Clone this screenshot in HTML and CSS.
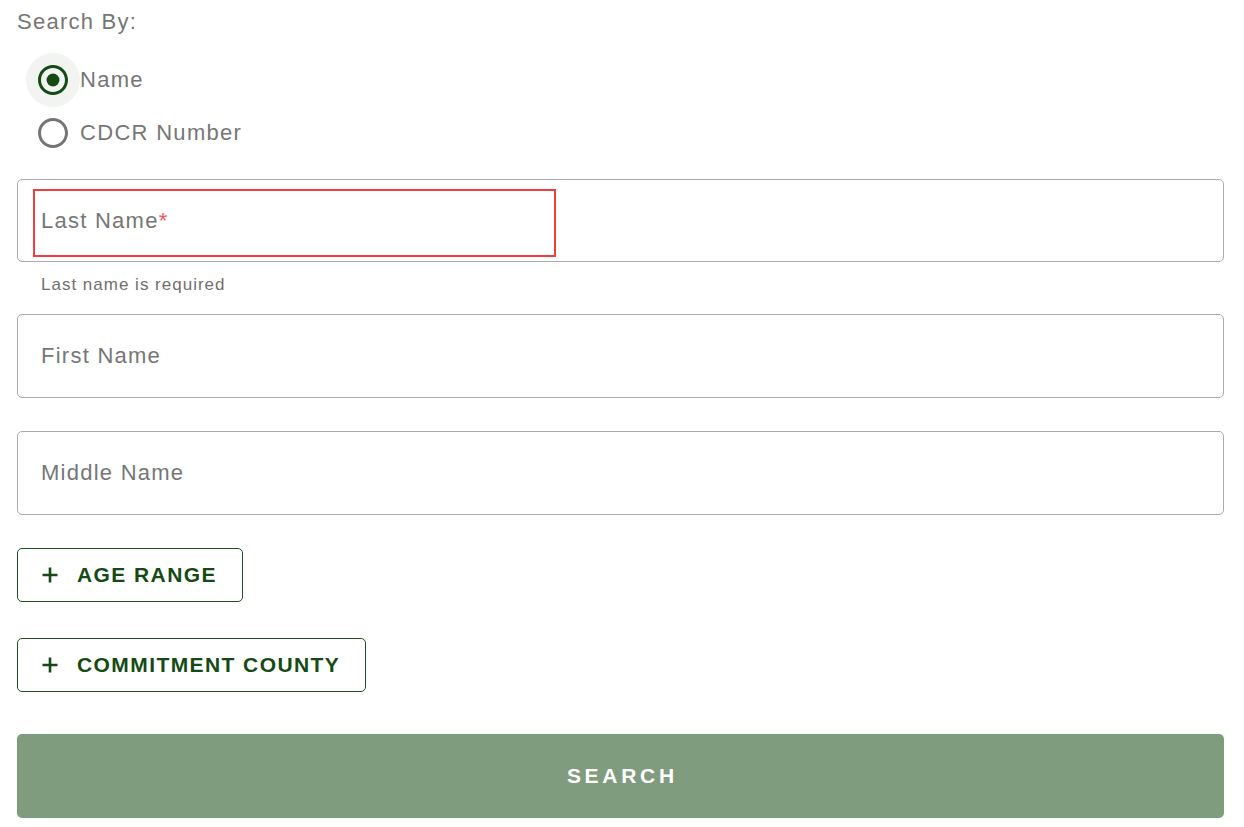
FILE: index.html
```html
<!DOCTYPE html>
<html lang="en">
<head>
<meta charset="utf-8">
<title>Search</title>
<link rel="stylesheet" href="styles.css">
</head>
<body>
<form class="search-form">
  <div class="search-by">Search By:</div>
  <div class="radio-group">
    <label class="radio-row">
      <span class="radio checked">
        <svg viewBox="0 0 24 24" width="36" height="36"><path fill="currentColor" d="M12 2C6.48 2 2 6.48 2 12s4.48 10 10 10 10-4.48 10-10S17.52 2 12 2zm0 18c-4.42 0-8-3.58-8-8s3.58-8 8-8 8 3.58 8 8-3.58 8-8 8z"/><circle cx="12" cy="12" r="4.3" fill="currentColor"/></svg>
      </span>
      <span class="radio-label">Name</span>
    </label>
    <label class="radio-row">
      <span class="radio">
        <svg viewBox="0 0 24 24" width="36" height="36"><path fill="currentColor" d="M12 2C6.48 2 2 6.48 2 12s4.48 10 10 10 10-4.48 10-10S17.52 2 12 2zm0 18c-4.42 0-8-3.58-8-8s3.58-8 8-8 8 3.58 8 8-3.58 8-8 8z"/></svg>
      </span>
      <span class="radio-label">CDCR Number</span>
    </label>
  </div>

  <div class="field field-first">
    <span class="field-label">Last Name<span class="req">*</span></span>
    <span class="highlight"></span>
  </div>
  <div class="helper">Last name is required</div>

  <div class="field field-gap1">
    <span class="field-label">First Name</span>
  </div>

  <div class="field field-gap2">
    <span class="field-label">Middle Name</span>
  </div>

  <button type="button" class="outline-btn btn-age">
    <svg class="plus" viewBox="0 0 16 16" width="16" height="16"><path d="M8 0.5v15M0.5 8h15" stroke="currentColor" stroke-width="2.6" fill="none"/></svg>
    <span>AGE RANGE</span>
  </button>

  <button type="button" class="outline-btn btn-county">
    <svg class="plus" viewBox="0 0 16 16" width="16" height="16"><path d="M8 0.5v15M0.5 8h15" stroke="currentColor" stroke-width="2.6" fill="none"/></svg>
    <span>COMMITMENT COUNTY</span>
  </button>

  <button type="button" class="search-btn">SEARCH</button>
</form>
</body>
</html>
```

FILE: styles.css
```css
* { box-sizing: border-box; }

html, body {
  margin: 0;
  padding: 0;
  background: #ffffff;
}

body {
  font-family: "Liberation Sans", Arial, sans-serif;
  color: #757575;
}

.search-form {
  display: flex;
  flex-direction: column;
  align-items: flex-start;
  padding: 7px 20px 0 17px;
}

.search-by {
  font-size: 22px;
  line-height: 30px;
  letter-spacing: 1.25px;
  color: #767676;
}

.radio-group {
  display: flex;
  flex-direction: column;
  margin-top: 16px;
}

.radio-row {
  display: flex;
  align-items: center;
  height: 53px;
  cursor: pointer;
}

.radio {
  display: flex;
  align-items: center;
  justify-content: center;
  width: 54px;
  height: 54px;
  margin-left: 9px;
  border-radius: 50%;
  color: #757575;
  flex: none;
}

.radio.checked {
  color: #154a15;
  background: #f1f4f1;
}

.radio svg { display: block; }

.radio-label {
  font-size: 22px;
  letter-spacing: 1.3px;
  color: #767676;
}

.field {
  position: relative;
  align-self: stretch;
  display: flex;
  align-items: center;
  height: 84px;
  border: 1px solid #ababab;
  border-radius: 5px;
  padding-left: 23px;
}

.field-first {
  margin-top: 20px;
  height: 83px;
}

.field-gap1 { margin-top: 19px; }
.field-gap2 { margin-top: 33px; }

.field-label {
  font-size: 22px;
  letter-spacing: 1.25px;
  color: #767676;
}

.req {
  color: #f05a5a;
  letter-spacing: 0;
}

.highlight {
  position: absolute;
  left: 15px;
  top: 9px;
  width: 523px;
  height: 68px;
  border: 2px solid #f03d3d;
  pointer-events: none;
}

.helper {
  margin-top: 13px;
  padding-left: 24px;
  font-size: 17px;
  line-height: 20px;
  letter-spacing: 1px;
  color: #6f6f6f;
}

.outline-btn {
  display: flex;
  align-items: center;
  gap: 19px;
  height: 54px;
  padding: 0 25px 0 24px;
  border: 1px solid #1f4f1f;
  border-radius: 5px;
  background: #ffffff;
  color: #154a15;
  font-family: "Liberation Sans", Arial, sans-serif;
  font-weight: 700;
  font-size: 21px;
  letter-spacing: 1.42px;
  cursor: pointer;
}

.plus { display: block; flex: none; }

.btn-age { margin-top: 33px; }
.btn-county { margin-top: 36px; }

.search-btn {
  align-self: stretch;
  margin-top: 42px;
  height: 84px;
  border: none;
  border-radius: 5px;
  background: #809c7e;
  color: #ffffff;
  font-family: "Liberation Sans", Arial, sans-serif;
  font-weight: 700;
  font-size: 21px;
  letter-spacing: 3.7px;
  text-indent: 3.7px;
  cursor: pointer;
}
```
